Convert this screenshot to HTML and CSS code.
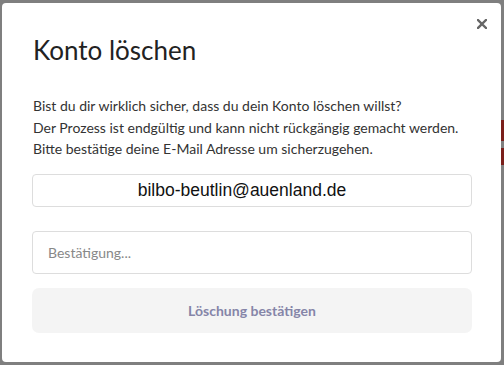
FILE: index.html
```html
<!DOCTYPE html>
<html>

<head>
    <link rel="stylesheet" href="styles.css">
</head>

<body>
    <div class="backdrop">
        <div class="stripe"></div>
        <div class="stripe"></div>
    </div>
    <div class="overlay">
        <div class="modal">
            <button class="close" type="button">
                <svg width="10" height="10" viewBox="0 0 10 10">
                    <path d="M1 1L9 9M9 1L1 9" stroke="#666" stroke-width="2.4" stroke-linecap="square" />
                </svg>
            </button>
            <h1>Konto löschen</h1>
            <p class="info">
                Bist du dir wirklich sicher, dass du dein Konto löschen willst?<br>
                Der Prozess ist endgültig und kann nicht rückgängig gemacht werden.<br>
                Bitte bestätige deine E-Mail Adresse um sicherzugehen.
            </p>
            <div class="mail">bilbo-beutlin@auenland.de</div>
            <input class="confirm" type="text" placeholder="Bestätigung...">
            <button class="submit" type="button">Löschung bestätigen</button>
        </div>
    </div>
</body>

</html>
```

FILE: styles.css
```css
* {
    padding: 0;
    margin: 0;
    box-sizing: border-box;
}

body {
    width: 504px;
    height: 365px;
    background: #7f7f7f;
    font-family: Lato, sans-serif;
    overflow: hidden;
    position: relative;
}

.backdrop {
    position: absolute;
    right: 0;
    top: 120px;
    width: 6px;
    display: flex;
    flex-direction: column;
    gap: 7px;
}

.stripe {
    height: 21px;
    background: #7a1f1a;
}

.stripe + .stripe {
    height: 17px;
}

.overlay {
    position: relative;
    padding: 3px 3px 3px 2px;
}

.modal {
    position: relative;
    width: 499px;
    height: 359px;
    background: #fff;
    border-radius: 4px;
    padding: 32px 30px 0 30px;
}

.close {
    position: absolute;
    top: 16px;
    right: 14px;
    border: none;
    background: none;
    display: flex;
}

h1 {
    font-size: 26px;
    font-weight: normal;
    color: #222;
    line-height: 30px;
    padding-left: 1px;
}

.info {
    margin-top: 30px;
    font-size: 14px;
    line-height: 21.5px;
    color: #333;
    padding-left: 1px;
}

.mail {
    margin-top: 14px;
    width: 440px;
    height: 33px;
    border: 1px solid #ddd;
    border-radius: 4px;
    padding-right: 20px;
    text-align: center;
    font-family: "Liberation Sans", Arial, sans-serif;
    font-size: 17.5px;
    line-height: 30px;
    color: #111;
}

.confirm {
    display: block;
    margin-top: 24px;
    width: 440px;
    height: 43px;
    border: 1px solid #ddd;
    border-radius: 4px;
    padding: 0 15px;
    font-family: Lato, sans-serif;
    font-size: 14px;
    color: #333;
    outline: none;
}

.confirm::placeholder {
    color: #888;
}

.submit {
    display: block;
    margin-top: 14px;
    width: 440px;
    height: 45px;
    border: none;
    border-radius: 7px;
    background: #f4f4f4;
    font-family: Lato, sans-serif;
    font-size: 14px;
    font-weight: bold;
    color: #8585a8;
}
```
